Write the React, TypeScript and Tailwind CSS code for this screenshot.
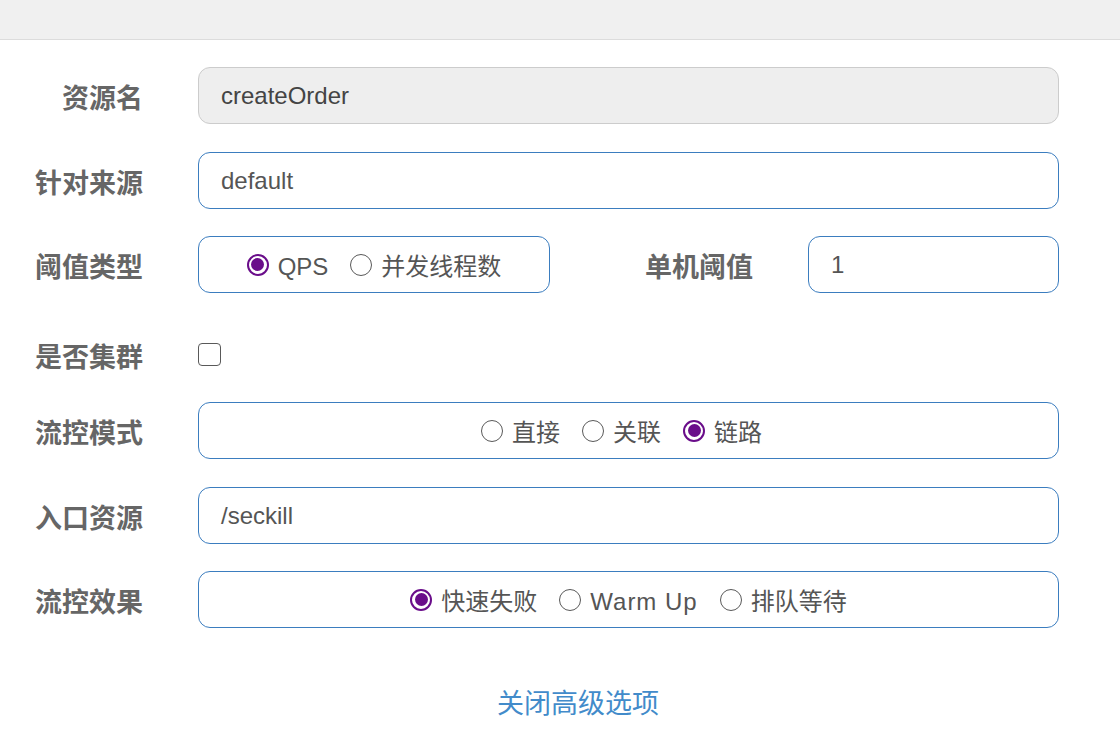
import React from "react";

const FONT = { fontFamily: '"Liberation Sans", Arial, "Noto Sans CJK SC", sans-serif' };

function Radio({ checked, label, wide }: { checked?: boolean; label: string; wide?: boolean }) {
  return (
    <span className="flex items-center">
      {checked ? (
        <span className="flex h-[22px] w-[22px] items-center justify-center rounded-full border-[2px] border-[#6a0d8a] bg-white">
          <span className="h-[13px] w-[13px] rounded-full bg-[#6a0d8a]" />
        </span>
      ) : (
        <span className="h-[22px] w-[22px] rounded-full border-[1.5px] border-[#595959] bg-white" />
      )}
      <span
        className={`ml-[9px] pt-[5px] text-[24px] leading-none text-[#555] ${wide ? "tracking-[1px]" : ""}`}
      >
        {label}
      </span>
    </span>
  );
}

function Label({ children, w = "w-[143px]" }: { children: React.ReactNode; w?: string }) {
  return (
    <div className={`${w} shrink-0 pt-[8px] text-right text-[27px] font-bold leading-none text-[#666]`}>{children}</div>
  );
}

export default function App() {
  return (
    <div className="min-h-[733px] w-[1120px] bg-white" style={FONT}>
      <div className="h-[40px] border-b border-[#dcdcdc] bg-[#f0f0f0]" />
      <div className="pr-[61px] pt-[27px]">
        {/* row 1 */}
        <div className="flex h-[57px] items-center">
          <Label>资源名</Label>
          <div className="ml-[55px] flex h-[57px] flex-1 items-center rounded-[12px] border border-[#cccccc] bg-[#eeeeee] pl-[22px] text-[24px] text-[#444]">
            createOrder
          </div>
        </div>
        {/* row 2 */}
        <div className="mt-[28px] flex h-[57px] items-center">
          <Label>针对来源</Label>
          <div className="ml-[55px] flex h-[57px] flex-1 items-center rounded-[12px] border border-[#3b7dbf] bg-white pl-[22px] text-[24px] text-[#555]">
            default
          </div>
        </div>
        {/* row 3 */}
        <div className="mt-[27px] flex h-[57px] items-center">
          <Label>阈值类型</Label>
          <div className="ml-[55px] flex h-[57px] w-[352px] items-center justify-center gap-[22px] rounded-[12px] border border-[#3b7dbf] bg-white">
            <Radio checked label="QPS" />
            <Radio label="并发线程数" />
          </div>
          <Label w="w-[203px]">单机阈值</Label>
          <div className="ml-[55px] flex h-[57px] flex-1 items-center rounded-[12px] border border-[#3b7dbf] bg-white pl-[22px] text-[24px] text-[#555]">
            1
          </div>
        </div>
        {/* row 4 */}
        <div className="mt-[49px] flex h-[24px] items-center">
          <Label>是否集群</Label>
          <div className="ml-[55px] h-[23px] w-[23px] rounded-[4px] border-[1.5px] border-[#595959] bg-white" />
        </div>
        {/* row 5 */}
        <div className="mt-[36px] flex h-[57px] items-center">
          <Label>流控模式</Label>
          <div className="ml-[55px] flex h-[57px] flex-1 items-center justify-center gap-[22px] rounded-[12px] border border-[#3b7dbf] bg-white pr-[14px]">
            <Radio label="直接" />
            <Radio label="关联" />
            <Radio checked label="链路" />
          </div>
        </div>
        {/* row 6 */}
        <div className="mt-[28px] flex h-[57px] items-center">
          <Label>入口资源</Label>
          <div className="ml-[55px] flex h-[57px] flex-1 items-center rounded-[12px] border border-[#3b7dbf] bg-white pl-[22px] text-[24px] text-[#555]">
            /seckill
          </div>
        </div>
        {/* row 7 */}
        <div className="mt-[27px] flex h-[57px] items-center">
          <Label>流控效果</Label>
          <div className="ml-[55px] flex h-[57px] flex-1 items-center justify-center gap-[22px] rounded-[12px] border border-[#3b7dbf] bg-white">
            <Radio checked label="快速失败" />
            <Radio label="Warm Up" wide />
            <Radio label="排队等待" />
          </div>
        </div>
      </div>
      <div className="mt-[63px] flex justify-center pl-[36px]">
        <span className="text-[27px] leading-none text-[#428bca]">关闭高级选项</span>
      </div>
    </div>
  );
}
